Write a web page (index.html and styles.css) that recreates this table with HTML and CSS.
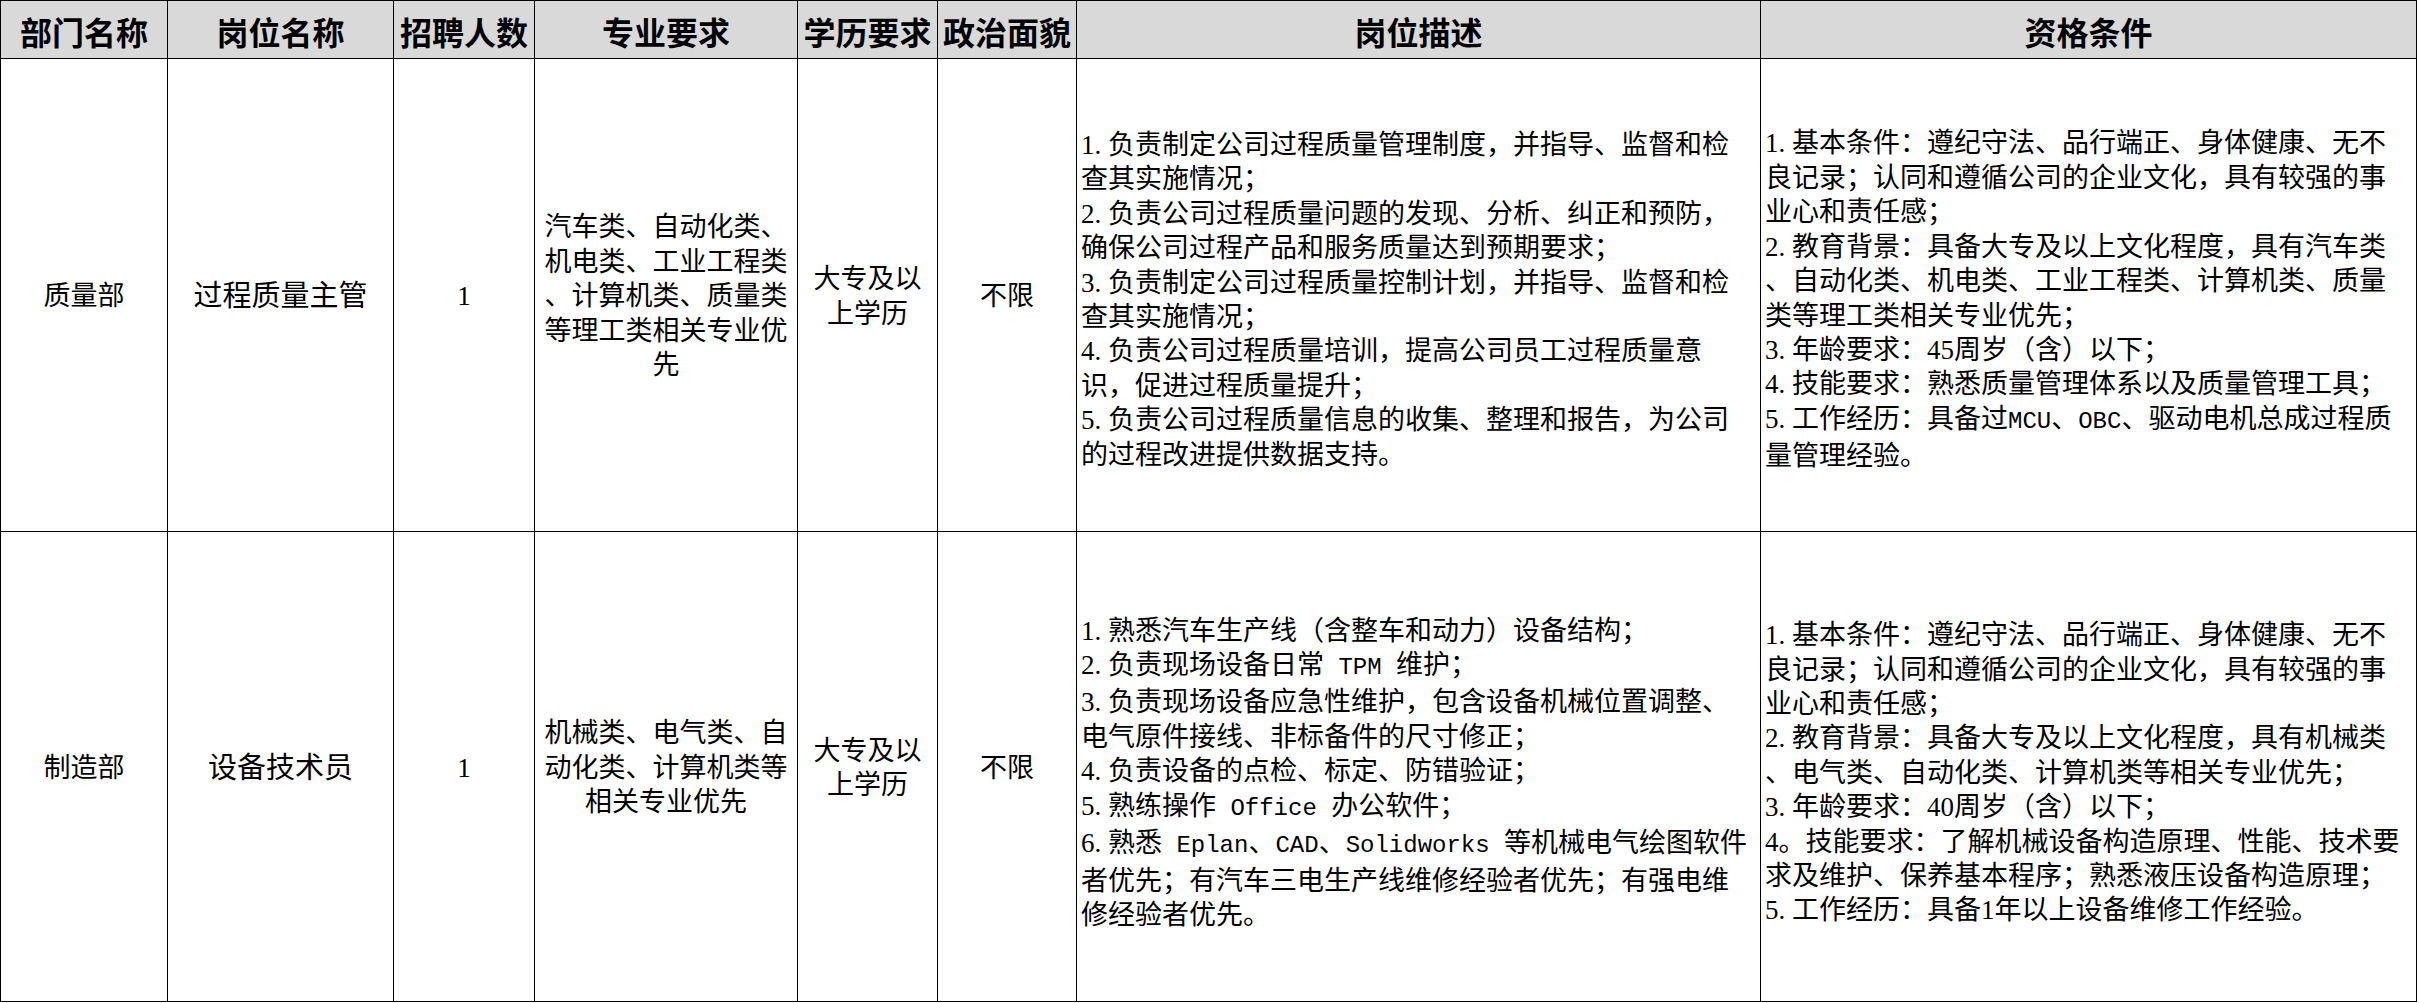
FILE: index.html
```html
<!DOCTYPE html>
<html lang="zh-CN">
<head>
<meta charset="utf-8">
<title>招聘岗位表</title>
<link rel="stylesheet" href="styles.css">
</head>
<body>
<table class="sheet">
  <colgroup>
    <col class="w-dept">
    <col class="w-post">
    <col class="w-num">
    <col class="w-major">
    <col class="w-edu">
    <col class="w-pol">
    <col class="w-desc">
    <col class="w-qual">
  </colgroup>
  <thead>
    <tr class="head-row">
      <th>部门名称</th>
      <th>岗位名称</th>
      <th>招聘人数</th>
      <th>专业要求</th>
      <th>学历要求</th>
      <th>政治面貌</th>
      <th>岗位描述</th>
      <th>资格条件</th>
    </tr>
  </thead>
  <tbody>
    <tr class="row-1">
      <td class="mid">质量部</td>
      <td class="mid post">过程质量主管</td>
      <td class="mid">1</td>
      <td class="mid">汽车类、自动化类、<br>机电类、工业工程类<br>、计算机类、质量类<br>等理工类相关专业优<br>先</td>
      <td class="mid">大专及以<br>上学历</td>
      <td class="mid">不限</td>
      <td class="txt"><span class="idx">1.</span>负责制定公司过程质量管理制度，并指导、监督和检<br>查其实施情况；<br><span class="idx">2.</span>负责公司过程质量问题的发现、分析、纠正和预防，<br>确保公司过程产品和服务质量达到预期要求；<br><span class="idx">3.</span>负责制定公司过程质量控制计划，并指导、监督和检<br>查其实施情况；<br><span class="idx">4.</span>负责公司过程质量培训，提高公司员工过程质量意<br>识，促进过程质量提升；<br><span class="idx">5.</span>负责公司过程质量信息的收集、整理和报告，为公司<br>的过程改进提供数据支持。</td>
      <td class="txt"><span class="idx">1.</span>基本条件：遵纪守法、品行端正、身体健康、无不<br>良记录；认同和遵循公司的企业文化，具有较强的事<br>业心和责任感；<br><span class="idx">2.</span>教育背景：具备大专及以上文化程度，具有汽车类<br>、自动化类、机电类、工业工程类、计算机类、质量<br>类等理工类相关专业优先；<br><span class="idx">3.</span>年龄要求：45周岁（含）以下；<br><span class="idx">4.</span>技能要求：熟悉质量管理体系以及质量管理工具；<br><span class="idx">5.</span>工作经历：具备过<span class="lat">MCU</span>、<span class="lat">OBC</span>、驱动电机总成过程质<br>量管理经验。</td>
    </tr>
    <tr class="row-2">
      <td class="mid">制造部</td>
      <td class="mid post">设备技术员</td>
      <td class="mid">1</td>
      <td class="mid">机械类、电气类、自<br>动化类、计算机类等<br>相关专业优先</td>
      <td class="mid">大专及以<br>上学历</td>
      <td class="mid">不限</td>
      <td class="txt low"><span class="idx">1.</span>熟悉汽车生产线（含整车和动力）设备结构；<br><span class="idx">2.</span>负责现场设备日常<span class="lat"> TPM </span>维护；<br><span class="idx">3.</span>负责现场设备应急性维护，包含设备机械位置调整、<br>电气原件接线、非标备件的尺寸修正；<br><span class="idx">4.</span>负责设备的点检、标定、防错验证；<br><span class="idx">5.</span>熟练操作<span class="lat"> Office </span>办公软件；<br><span class="idx">6.</span>熟悉<span class="lat"> Eplan</span>、<span class="lat">CAD</span>、<span class="lat">Solidworks </span>等机械电气绘图软件<br>者优先；有汽车三电生产线维修经验者优先；有强电维<br>修经验者优先。</td>
      <td class="txt low"><span class="idx">1.</span>基本条件：遵纪守法、品行端正、身体健康、无不<br>良记录；认同和遵循公司的企业文化，具有较强的事<br>业心和责任感；<br><span class="idx">2.</span>教育背景：具备大专及以上文化程度，具有机械类<br>、电气类、自动化类、计算机类等相关专业优先；<br><span class="idx">3.</span>年龄要求：40周岁（含）以下；<br>4。技能要求：了解机械设备构造原理、性能、技术要<br>求及维护、保养基本程序；熟悉液压设备构造原理；<br><span class="idx">5.</span>工作经历：具备1年以上设备维修工作经验。</td>
    </tr>
  </tbody>
</table>
</body>
</html>
```

FILE: styles.css
```css
html, body {
  margin: 0;
  padding: 0;
  background: #ffffff;
}

.sheet {
  border-collapse: collapse;
  table-layout: fixed;
  width: 2417px;
  color: #000000;
}

.w-dept  { width: 167px; }
.w-post  { width: 226px; }
.w-num   { width: 141px; }
.w-major { width: 263px; }
.w-edu   { width: 140px; }
.w-pol   { width: 139px; }
.w-desc  { width: 684px; }
.w-qual  { width: 656px; }

.sheet th,
.sheet td {
  border: 1px solid #000000;
  padding: 0;
  overflow: hidden;
}

.head-row th {
  height: 58px;
  box-sizing: border-box;
  background: #d9d9d9;
  font-family: "Noto Sans CJK SC", "Liberation Sans", sans-serif;
  font-weight: 700;
  font-size: 32px;
  line-height: 40px;
  padding-top: 2px;
  text-align: center;
  vertical-align: middle;
  white-space: nowrap;
}

.row-1 td { height: 473px; }
.row-2 td { height: 470px; }

.sheet td {
  box-sizing: border-box;
  font-family: "Liberation Serif", "Noto Sans CJK SC", serif;
  font-weight: 400;
  font-size: 27px;
  line-height: 34.4px;
  vertical-align: middle;
  white-space: nowrap;
}

.sheet td.mid {
  text-align: center;
  padding-top: 3px;
}

.sheet td.post {
  font-size: 29px;
}

.sheet td.txt {
  text-align: left;
  padding: 10px 4px 0 4px;
}

.sheet td.txt.low {
  padding-top: 13px;
}

.idx {
  display: inline-block;
  width: 1em;
}

.lat {
  font-family: "Liberation Mono", monospace;
  font-size: 24px;
}
```
